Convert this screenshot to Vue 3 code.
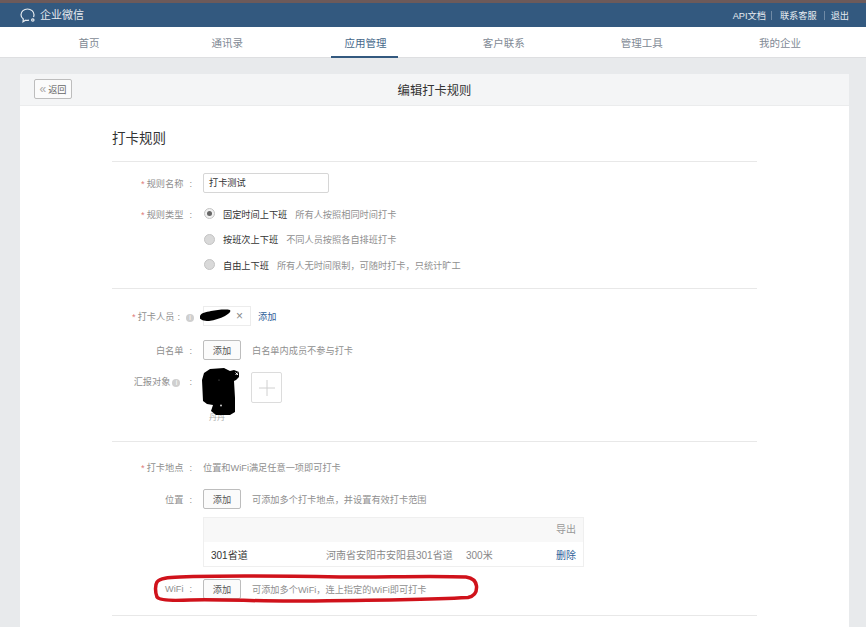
<template>
  <div class="page">
    <div class="strip"></div>
    <header class="topbar">
      <div class="logo">
        <svg width="17" height="15" viewBox="0 0 17 15" fill="none" stroke="#e6ebf0" stroke-width="1.200">
          <path d="M9 12.200C8 12.400 6.500 12.500 5.500 12.200L3 13.800 3.300 11C1.700 10 1 8.500 1 6.800 1 3.500 4 1 7.500 1S14 3.500 14 6.800c0 .8-.2 1.500-.5 2.200" />
          <circle cx="12.800" cy="12" r="1.200" />
        </svg>
        <span>企业微信</span>
      </div>
      <div class="toplinks">
        <a>API文档</a><i></i><a>联系客服</a><i></i><a>退出</a>
      </div>
    </header>
    <nav class="nav">
      <a v-for="item in navItems" :key="item" :class="{ active: item === '应用管理' }">{{ item }}</a>
    </nav>

    <main class="card">
      <div class="card-head">
        <button class="back"><span class="chev">«</span>返回</button>
        <h1>编辑打卡规则</h1>
      </div>
      <div class="body">
        <h2>打卡规则</h2>

        <section class="sec sec-rule">
          <div class="row row-name">
            <label class="lab"><em>*</em>规则名称<span class="colon">:</span></label>
            <div class="input">打卡测试</div>
          </div>
          <div class="row row-type" v-for="(t, i) in ruleTypes" :key="t.name">
            <label class="lab"><template v-if="i === 0"><em>*</em>规则类型<span class="colon">:</span></template></label>
            <span class="radio" :class="{ on: i === 0 }"></span>
            <b>{{ t.name }}</b>
            <span class="hint">{{ t.desc }}</span>
          </div>
        </section>

        <section class="sec sec-people">
          <div class="row row-person">
            <label class="lab lab-info"><em>*</em>打卡人员<span class="colon near">:</span><span class="info">i</span></label>
            <div class="person">
              <svg class="blot-a" width="32" height="12" viewBox="0 0 32 12"><path d="M0 7C1 4 6 3 11 2 17 1 25 0 30 1 31.500 3 28 5 25 7 20 9.500 15 11 9 12 3 12 1 10.500 0 9.500 0 8 0 7Z" fill="#000"/></svg>
              <span class="x">×</span>
            </div>
            <a class="link">添加</a>
          </div>
          <div class="row row-white">
            <label class="lab">白名单<span class="colon">:</span></label>
            <button class="btn">添加</button>
            <span class="hint tip">白名单内成员不参与打卡</span>
          </div>
          <div class="row row-report">
            <label class="lab lab-report">汇报对象<span class="info mid">i</span><span class="colon near">:</span></label>
            <div class="blot-wrap">
              <svg width="38" height="47" viewBox="0 0 38 47"><path d="M8 1 22 0 28 3 32 2 37 4V9L34 12 32 13 33 30V44L28 47H14L9 43 11 37 5 36 1 33 0 12 2 5z" fill="#000"/><path d="M33.500 4.500l2.500 2.500M36 4.500l-2.500 2.500" stroke="#fff" stroke-width="1"/><circle cx="17" cy="12" r=".6" fill="#777"/><circle cx="19" cy="37.500" r="1" fill="#ccc"/></svg>
              <span class="blot-name">丹丹</span>
            </div>
            <div class="plus">
              <svg width="16" height="16" viewBox="0 0 16 16" stroke="#d0d0d0" stroke-width="1"><path d="M8 0v16M0 8h16"/></svg>
            </div>
          </div>
        </section>

        <section class="sec sec-place">
          <div class="row row-place">
            <label class="lab"><em>*</em>打卡地点<span class="colon">:</span></label>
            <span class="hint">位置和WiFi满足任意一项即可打卡</span>
          </div>
          <div class="row row-pos">
            <label class="lab">位置<span class="colon">:</span></label>
            <button class="btn">添加</button>
            <span class="hint tip">可添加多个打卡地点，并设置有效打卡范围</span>
          </div>
          <div class="table">
            <div class="thead">导出</div>
            <div class="tr">
              <span class="c-name">301省道</span>
              <span class="c-addr">河南省安阳市安阳县301省道</span>
              <span class="c-range">300米</span>
              <a class="link c-del">删除</a>
            </div>
          </div>
          <div class="row row-wifi">
            <label class="lab">WiFi<span class="colon">:</span></label>
            <button class="btn">添加</button>
            <span class="hint tip">可添加多个WiFi，连上指定的WiFi即可打卡</span>
            <svg class="circle" width="332" height="34" viewBox="0 0 332 34" fill="none" stroke="#d0121b" stroke-width="3.500" stroke-linejoin="round">
              <path d="M30 5C70 3.500 130 4 190 5 240 5 290 3.500 316 5 323 6 326 9 326.500 14 327 20 325 24 318 25.500 270 28 220 28.500 150 29 110 29.500 70 27 40 28 20 29 9 28 7 25 5 20 5 13 7 10 10 6 18 5.500 30 5Z" />
            </svg>
          </div>
        </section>
      </div>
    </main>
  </div>
</template>

<script setup>
const navItems = ['首页', '通讯录', '应用管理', '客户联系', '管理工具', '我的企业']
const ruleTypes = [
  { name: '固定时间上下班', desc: '所有人按照相同时间打卡' },
  { name: '按班次上下班', desc: '不同人员按照各自排班打卡' },
  { name: '自由上下班', desc: '所有人无时间限制，可随时打卡，只统计旷工' }
]
</script>

<style>
html, body { margin: 0; height: 627px; overflow: hidden; background: #e8eaec; }
</style>

<style scoped>
.page {
  height: 627px;
  overflow: hidden;
  font-family: "Liberation Sans", "Noto Sans CJK SC", sans-serif;
  font-size: 10px;
  color: #888;
  background: #e8eaec;
}
.strip { height: 3px; background: #6d5a5a; }
.topbar {
  height: 24px;
  background: #33597f;
  display: flex;
  align-items: center;
  justify-content: space-between;
  padding: 0 17px 0 20px;
  color: #fff;
}
.logo { display: flex; align-items: center; gap: 3px; font-size: 11px; line-height: 14px; color: #e6ebf0; }
.logo svg { display: block; }
.toplinks { display: flex; align-items: center; font-size: 9.200px; color: #e6ebf0; }
.toplinks i { width: 1px; height: 9px; background: #6f8aa5; margin: 0 8px 0 5px; }
.toplinks i:nth-of-type(2) { margin: 0 6px 0 7px; }
.nav {
  height: 31px;
  box-sizing: border-box;
  background: #fff;
  border-bottom: 1px solid #dedfe1;
  display: flex;
  padding: 0 0 0 20px;
}
.nav a {
  width: 138.200px;
  text-align: center;
  line-height: 32px;
  font-size: 10.500px;
  color: #7f8a95;
  position: relative;
  box-sizing: border-box;
}
.nav a.active { color: #46688a; }
.nav a.active::after {
  content: "";
  position: absolute;
  left: 35px;
  right: 37px;
  bottom: -1px;
  height: 2px;
  background: #33597f;
}
.card {
  margin: 16px 17px 0 20px;
  background: #fff;
  height: 600px;
}
.card-head {
  height: 31px;
  background: #f4f5f6;
  border-bottom: 1px solid #ebeced;
  display: flex;
  align-items: center;
  justify-content: center;
  position: relative;
}
.back {
  position: absolute;
  left: 14px;
  top: 5px;
  width: 38px;
  height: 20px;
  padding: 0;
  box-sizing: border-box;
  border: 1px solid #bdbdbd;
  border-radius: 2px;
  background: #fbfbfb;
  font: inherit;
  font-size: 9.200px;
  color: #666;
  display: flex;
  align-items: center;
  justify-content: center;
}
.chev { color: #aaa; font-size: 12px; line-height: 14px; margin-right: 2px; }
.card-head h1 { margin: 0; font-size: 12.300px; font-weight: 400; color: #333; }
.body { padding: 0 92px; }
h2 {
  margin: 0;
  padding-top: 24px;
  height: 31px;
  line-height: 18px;
  font-size: 13.500px;
  font-weight: 400;
  color: #333;
  border-bottom: 1px solid #e8e8e8;
}
.sec { border-bottom: 1px solid #e8e8e8; box-sizing: border-box; }
.sec-rule { height: 127px; padding-top: 11px; }
.sec-people { height: 153px; padding-top: 17px; }
.sec-place { height: 174px; padding-top: 18px; }
.row { display: flex; align-items: center; }
.lab {
  width: 80px;
  flex: none;
  margin-right: 11px;
  text-align: right;
  font-size: 9.200px;
  color: #8f8f8f;
  white-space: nowrap;
}
.lab em { color: #e07a7a; font-style: normal; margin-right: 2px; }
.colon { margin-left: 6px; }
.colon.near { margin-left: 3px; }
.lab-info { width: 82px; margin-right: 9px; }
.lab-report { width: 80px; margin-top: 4px; line-height: 20px; }
.lab-report .colon { margin-left: 0; }
.input {
  width: 126px;
  height: 20px;
  box-sizing: border-box;
  border: 1px solid #d6d6d6;
  border-radius: 2px;
  padding-left: 5px;
  line-height: 18px;
  font-size: 9.200px;
  color: #333;
}
.row-name { height: 20px; margin-bottom: 8px; }
.row-type { height: 25.500px; }
.row-type .hint { margin-left: 8px; }
.radio {
  width: 11px;
  height: 11px;
  border-radius: 50%;
  background: #d9d9d9;
  border: 1px solid #c4c4c4;
  box-sizing: border-box;
  margin: 0 8.500px 0 .5px;
  flex: none;
  display: flex;
  align-items: center;
  justify-content: center;
}
.radio.on { background: #f1f1f1; }
.radio.on::after { content: ""; width: 5px; height: 5px; border-radius: 50%; background: #666; }
b { font-weight: 400; font-size: 9.200px; color: #333; }
.hint { font-size: 9.200px; color: #8f8f8f; white-space: nowrap; }
.tip { margin-left: 11px; }
.info {
  display: inline-block;
  width: 8px;
  height: 8px;
  line-height: 8px;
  border-radius: 50%;
  background: #cfcfcf;
  color: #fff;
  font-size: 7px;
  text-align: center;
  margin-left: 6px;
}
.info.mid { margin: 0 9px 0 2px; }
.row-person { height: 20px; margin-bottom: 14px; }
.person {
  width: 48px;
  height: 20px;
  margin-right: 7px;
  border: 1px solid #ececec;
  box-sizing: border-box;
  position: relative;
}
.blot-a { position: absolute; left: -4px; top: 2px; }
.x { position: absolute; right: 7px; top: 2px; font-size: 12px; line-height: 14px; color: #888; }
.link { color: #2f6299; font-size: 9.200px; }
.btn {
  width: 38px;
  height: 20px;
  padding: 0;
  box-sizing: border-box;
  border: 1px solid #bdbdbd;
  border-radius: 2px;
  background: #fbfbfb;
  font: inherit;
  font-size: 9.200px;
  color: #555;
  flex: none;
}
.row-white { height: 20px; margin-bottom: 8px; }
.row-report { align-items: flex-start; }
.blot-wrap { width: 37px; height: 60px; margin: 0 12px 0 -1px; position: relative; }
.blot-name { position: absolute; left: 7px; top: 43px; font-size: 8px; color: #aaa; }
.blot-wrap svg { position: relative; z-index: 1; display: block; }
.plus {
  width: 31px;
  height: 31px;
  margin-top: 4px;
  box-sizing: border-box;
  border: 1px solid #dcdcdc;
  border-radius: 2px;
  display: flex;
  align-items: center;
  justify-content: center;
}
.row-place { height: 14px; margin-bottom: 15px; }
.row-pos { height: 20px; margin-bottom: 8px; }
.table {
  margin-left: 91px;
  width: 381px;
  border: 1px solid #efefef;
  box-sizing: border-box;
}
.thead {
  height: 24px;
  line-height: 24px;
  background: #f8f8f8;
  text-align: right;
  padding-right: 7px;
  font-size: 10px;
  color: #999;
}
.tr {
  height: 24px;
  display: flex;
  align-items: center;
  font-size: 10px;
  padding: 0 7px;
}
.c-name { width: 115px; color: #333; }
.c-addr { width: 140px; color: #888; white-space: nowrap; }
.c-range { color: #888; }
.c-del { margin-left: auto; font-size: 10px; }
.row-wifi { height: 20px; margin-top: 12px; position: relative; }
.circle { position: absolute; left: 38px; top: -7px; pointer-events: none; }
</style>
